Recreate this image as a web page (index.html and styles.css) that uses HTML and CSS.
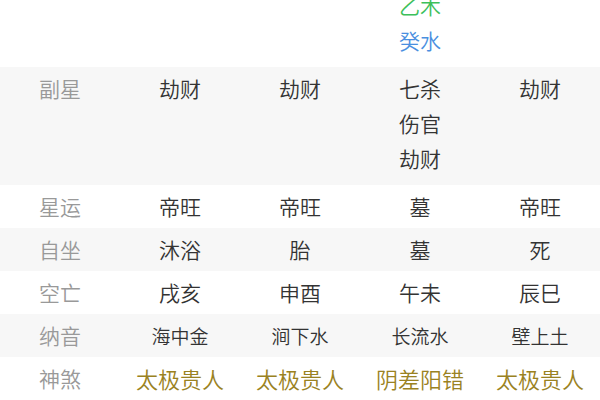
FILE: index.html
```html
<!DOCTYPE html>
<html lang="zh">
<head>
<meta charset="utf-8">
<link rel="stylesheet" href="styles.css">
</head>
<body>
<div class="table">
  <div class="row multi">
    <div class="cell label">藏干</div>
    <div class="cell"></div>
    <div class="cell"></div>
    <div class="cell"><span class="earth">戊土</span><span class="wood">乙木</span><span class="water">癸水</span></div>
    <div class="cell"></div>
  </div>
  <div class="row multi gray">
    <div class="cell label">副星</div>
    <div class="cell">劫财</div>
    <div class="cell">劫财</div>
    <div class="cell"><span>七杀</span><span>伤官</span><span>劫财</span></div>
    <div class="cell">劫财</div>
  </div>
  <div class="row">
    <div class="cell label">星运</div>
    <div class="cell">帝旺</div>
    <div class="cell">帝旺</div>
    <div class="cell">墓</div>
    <div class="cell">帝旺</div>
  </div>
  <div class="row gray">
    <div class="cell label">自坐</div>
    <div class="cell">沐浴</div>
    <div class="cell">胎</div>
    <div class="cell">墓</div>
    <div class="cell">死</div>
  </div>
  <div class="row">
    <div class="cell label">空亡</div>
    <div class="cell">戌亥</div>
    <div class="cell">申酉</div>
    <div class="cell">午未</div>
    <div class="cell">辰巳</div>
  </div>
  <div class="row gray nayin">
    <div class="cell label">纳音</div>
    <div class="cell">海中金</div>
    <div class="cell">涧下水</div>
    <div class="cell">长流水</div>
    <div class="cell">壁上土</div>
  </div>
  <div class="row shensha">
    <div class="cell label">神煞</div>
    <div class="cell">太极贵人</div>
    <div class="cell">太极贵人</div>
    <div class="cell">阴差阳错</div>
    <div class="cell">太极贵人</div>
  </div>
</div>
</body>
</html>
```
FILE: styles.css
```css
html, body {
  margin: 0;
  padding: 0;
  background: #ffffff;
  overflow: hidden;
}
body {
  width: 600px;
  height: 400px;
  font-family: "Noto Sans CJK SC", "Noto Sans", sans-serif;
  font-weight: 350;
}
.table {
  margin-top: -51px;
  display: flex;
  flex-direction: column;
}
.row {
  display: grid;
  grid-template-columns: repeat(5, 120px);
  padding: 4px 0;
  line-height: 35px;
  font-size: 21px;
  color: #333333;
}
.row.multi {
  padding-bottom: 9px;
}
.row.gray {
  background: #f7f7f7;
}
.cell {
  display: flex;
  flex-direction: column;
  align-items: center;
  text-align: center;
}
.cell.label {
  color: #999999;
}
.row.nayin .cell {
  font-size: 19px;
}
.row.nayin .cell.label {
  font-size: 21px;
}
.row.shensha .cell {
  color: #9a8222;
  font-size: 22px;
}
.row.shensha .cell.label {
  color: #999999;
  font-size: 21px;
}
.earth { color: #a0703a; }
.wood { color: #3cc05a; }
.water { color: #4a8fe0; }
```
